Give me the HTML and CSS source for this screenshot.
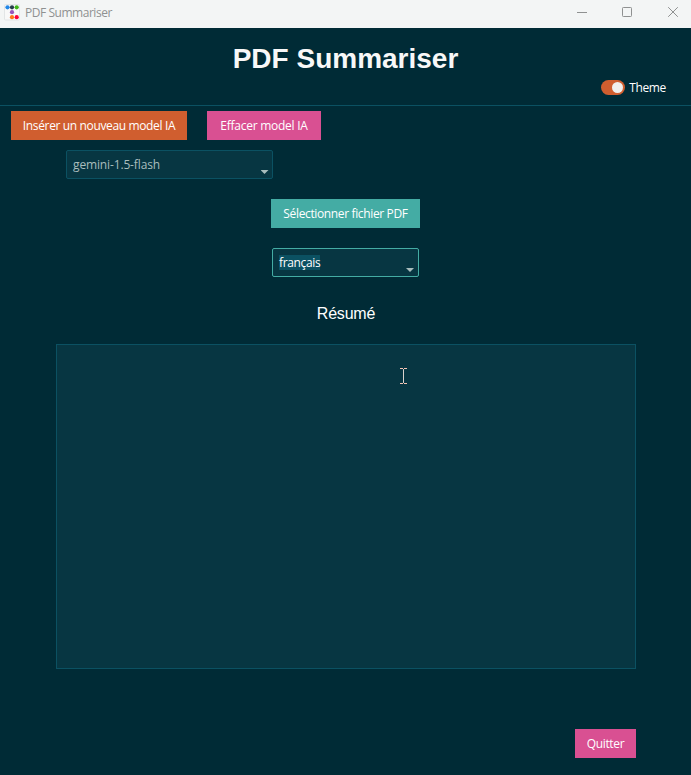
FILE: index.html
```
<!DOCTYPE html>
<html lang="fr">
<head>
<meta charset="utf-8">
<title>PDF Summariser</title>
<link rel="stylesheet" href="styles.css">
</head>
<body>
<div class="titlebar">
  <svg class="app-icon" width="16" height="17" viewBox="0 0 16 17">
    <rect x=".5" y=".5" width="15" height="15.5" rx="1" fill="#f8f8f8" stroke="#e2e5e6"/>
    <circle cx="3.5" cy="3.3" r="2.1" fill="#2187e8"/>
    <circle cx="8" cy="3.3" r="2.1" fill="#263c4b"/>
    <circle cx="12.7" cy="3.3" r="2.1" fill="#3fb618"/>
    <circle cx="8" cy="8.2" r="2.1" fill="#9954bb"/>
    <circle cx="8" cy="13.2" r="2.1" fill="#ff7518"/>
    <circle cx="12.7" cy="13.2" r="2.1" fill="#ff0039"/>
  </svg>
  <span class="window-title">PDF Summariser</span>
  <div class="window-controls">
    <svg width="10" height="10" viewBox="0 0 10 10"><path d="M0 5.5H10"/></svg>
    <svg width="10" height="10" viewBox="0 0 10 10"><rect x=".5" y=".5" width="9" height="9" rx=".8"/></svg>
    <svg width="10" height="10" viewBox="0 0 10 10"><path d="M.2 .2L9.8 9.8M9.8 .2L.2 9.8"/></svg>
  </div>
</div>
<main class="app">
  <h1>PDF Summariser</h1>
  <div class="theme"><span class="toggle"></span><span class="theme-label">Theme</span></div>
  <div class="model-actions">
    <button class="button insert"><span>Insérer un nouveau model IA</span></button>
    <button class="button remove"><span>Effacer model IA</span></button>
  </div>
  <div class="combo model"><span>gemini-1.5-flash</span><i class="arrow"></i></div>
  <button class="button pick"><span>Sélectionner fichier PDF</span></button>
  <div class="combo language"><span class="selected">français</span><i class="arrow"></i></div>
  <h2>Résumé</h2>
  <div class="summary">
    <svg class="caret" width="7" height="16" viewBox="0 0 7 16"><path d="M3.5 1V15" stroke="#d9d2cd"/><path d="M0 .5H3M4 .5H7M0 15.5H3M4 15.5H7" stroke="#f3c3b2"/></svg>
  </div>
  <button class="button quit"><span>Quitter</span></button>
</main>
</body>
</html>
```
FILE: styles.css
```
* { box-sizing: border-box; }
body {
  margin: 0;
  height: 775px;
  overflow: hidden;
  background: #002b36;
  color: #fff;
  font: 12px/16px "Open Sans", "Noto Sans", sans-serif;
}
.titlebar {
  display: flex;
  align-items: flex-start;
  height: 28px;
  padding-left: 4px;
  background: #f3f5f5;
  color: #8f9191;
}
.app-icon { margin-top: 4px; }
.window-title { margin: 5px 0 0 5px; letter-spacing: -.46px; }
.window-controls {
  display: flex;
  gap: 35px;
  margin: 7px 14px 0 auto;
}
.window-controls svg:last-child { margin-right: -1px; margin-left: 1px; }
.window-controls svg { fill: none; stroke: #8f9191; stroke-width: 1; }
.app { display: flex; flex-direction: column; height: 747px; }
h1 {
  margin: 15px 0 0;
  text-align: center;
  color: #f8f8f8;
  font: bold 28px/32px "Liberation Sans", Arial, sans-serif;
}
.theme {
  display: flex;
  align-items: center;
  height: 31px;
  padding: 0 25px 5px 0;
  justify-content: flex-end;
  border-bottom: 1px solid #0b5162;
}
.theme-label { padding-top: 1px; letter-spacing: -.36px; }
.toggle {
  display: flex;
  justify-content: flex-end;
  width: 24px;
  height: 15px;
  padding: 2px;
  margin-right: 4px;
  border-radius: 8px;
  background: #d05e2f;
}
.toggle::after { content: ""; width: 11px; height: 11px; border-radius: 50%; background: #f1efed; }
.model-actions { display: flex; gap: 20px; margin: 5px 0 0 11px; }
.button {
  display: flex;
  align-items: center;
  justify-content: center;
  flex: none;
  height: 29px;
  padding: 0;
  border: 0;
  color: #fff;
  font: inherit;
  white-space: nowrap;
  letter-spacing: -.36px;
}
.insert { width: 176px; background: #d05e2f; }
.remove { width: 114px; background: #d95092; letter-spacing: -.25px; }
.combo {
  display: flex;
  align-items: center;
  justify-content: space-between;
  flex: none;
  height: 29px;
  padding: 0 4px 0 6px;
  border: 1px solid #0b5162;
  border-radius: 2px;
  background: #073642;
  color: #a9bdbd;
  letter-spacing: -.14px;
}
.combo span { margin-top: 1px; }
.model { width: 207px; margin: 10px 0 0 66px; }
.arrow {
  width: 8px;
  height: 4px;
  margin-top: 15px;
  background: #a9bdbd;
  clip-path: polygon(0 0, 100% 0, 50% 100%);
}
.model .arrow { margin-right: -.5px; }
.pick { width: 149px; margin: 20px 0 0 271px; background: #44aca4; }
.language { width: 147px; margin: 20px 0 0 272px; border-color: #44aca4; color: #fff; letter-spacing: -.35px; }
.combo .selected { margin-top: 0; height: 15px; line-height: 15px; background: #0b5162; }
h2 {
  margin: 28px 0 0;
  padding-left: 1px;
  text-align: center;
  font: 16px/18px "Liberation Sans", Arial, sans-serif;
  letter-spacing: -.2px;
}
.summary {
  flex: none;
  width: 580px;
  height: 325px;
  margin: 21px 0 0 56px;
  padding: 23px 0 0 343px;
  border: 1px solid #0b5162;
  background: #073642;
}
.caret { display: block; }
.quit { width: 61px; margin: 60px 0 0 575px; background: #d95092; }
```
